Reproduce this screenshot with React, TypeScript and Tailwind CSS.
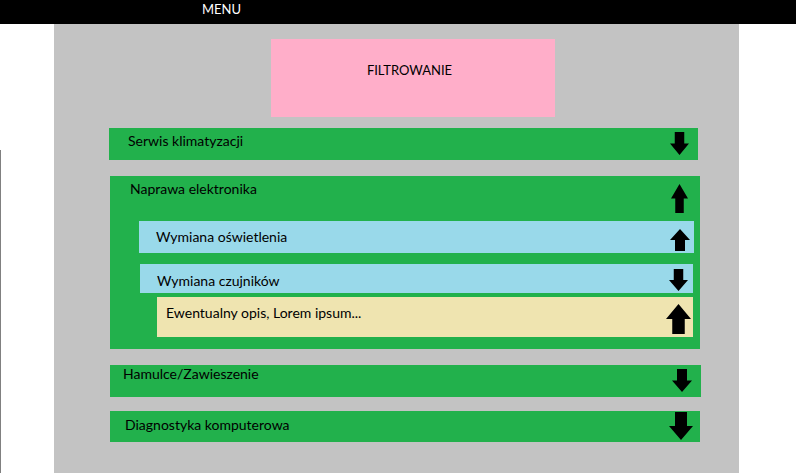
const DOWN = '25,0 75,0 75,50 100,50 50,100 0,50 25,50'
const UP = '50,0 100,50 75,50 75,100 25,100 25,50 0,50'

function Arrow({ up, w, h, className }: { up?: boolean; w: number; h: number; className: string }) {
  return (
    <svg
      width={w}
      height={h}
      viewBox="0 0 100 100"
      preserveAspectRatio="none"
      className={`shrink-0 ${className}`}
    >
      <polygon points={up ? UP : DOWN} fill="#000" />
    </svg>
  )
}

export default function App() {
  return (
    <div className="w-[796px] h-[473px] bg-white font-['Lato',sans-serif] text-black overflow-hidden">
      {/* Top bar */}
      <div className="h-[24px] bg-black flex items-start">
        <span className="ml-[202px] mt-[1px] text-[13px] leading-[16px] text-white">MENU</span>
      </div>

      <div className="flex h-[449px]">
        {/* Left edge */}
        <div className="w-[54px] flex flex-col">
          <div className="h-[126px]" />
          <div className="flex-1 border-l border-[#808080]" />
        </div>

        {/* Panel */}
        <div className="w-[685px] bg-[#c3c3c3] flex flex-col">
          <div className="ml-[217px] mt-[15px] w-[284px] h-[78px] bg-[#ffaec9] flex justify-center items-start pr-[7px]">
            <span className="mt-[23px] text-[13px] leading-[16px]">FILTROWANIE</span>
          </div>

          {/* Serwis */}
          <div className="ml-[55px] mt-[11px] w-[589px] h-[32px] bg-[#22b14c] flex justify-between items-start pl-[19px] pr-[9px]">
            <span className="mt-[5px] text-[14px] leading-[16px]">Serwis klimatyzacji</span>
            <Arrow w={19} h={23} className="mt-[4px]" />
          </div>

          {/* Naprawa */}
          <div className="ml-[56px] mt-[16px] w-[590px] h-[173px] bg-[#22b14c] flex flex-col">
            <div className="flex justify-between items-start pl-[20px] pr-[12px]">
              <span className="mt-[5px] text-[14px] leading-[16px]">Naprawa elektronika</span>
              <Arrow up w={17} h={29} className="mt-[8px]" />
            </div>

            <div className="ml-[29px] mt-[8px] w-[555px] h-[32px] bg-[#99d9ea] flex justify-between items-start pl-[17px] pr-[4px]">
              <span className="mt-[8px] text-[14px] leading-[16px]">Wymiana oświetlenia</span>
              <Arrow up w={20} h={22} className="mt-[8px]" />
            </div>

            <div className="ml-[30px] mt-[11px] w-[553px] h-[29px] bg-[#99d9ea] flex justify-between items-start pl-[17px] pr-[5px]">
              <span className="mt-[9px] text-[14px] leading-[16px]">Wymiana czujników</span>
              <Arrow w={19} h={22} className="mt-[5px]" />
            </div>

            <div className="ml-[47px] mt-[4px] w-[536px] h-[40px] bg-[#efe4b0] flex justify-between items-start pl-[9px] pr-[2px]">
              <span className="mt-[7px] text-[14px] leading-[18px]">Ewentualny opis, Lorem ipsum...</span>
              <Arrow up w={25} h={30} className="mt-[7px]" />
            </div>
          </div>

          {/* Hamulce */}
          <div className="ml-[56px] mt-[16px] w-[591px] h-[32px] bg-[#22b14c] flex justify-between items-start pl-[13px] pr-[9px]">
            <span className="mt-[1px] text-[14px] leading-[16px]">Hamulce/Zawieszenie</span>
            <Arrow w={20} h={23} className="mt-[4px]" />
          </div>

          {/* Diagnostyka */}
          <div className="ml-[56px] mt-[14px] w-[590px] h-[31px] bg-[#22b14c] flex justify-between items-start pl-[15px] pr-[7px]">
            <span className="mt-[6px] text-[14px] leading-[16px]">Diagnostyka komputerowa</span>
            <Arrow w={24} h={28} className="mt-[1px]" />
          </div>
        </div>
      </div>
    </div>
  )
}
